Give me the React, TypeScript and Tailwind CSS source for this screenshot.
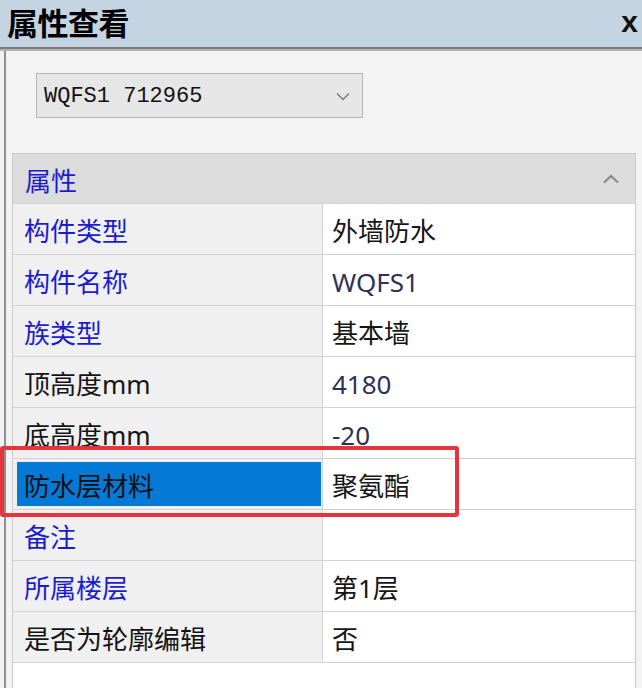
import React from "react";

const CJK = { fontFamily: '"Noto Sans", "Noto Sans CJK SC", sans-serif' };

type Row = { label: string; value: string; labelBlue: boolean; valueTone?: "navy" | "dark"; selected?: boolean };

const rows: Row[] = [
  { label: "构件类型", value: "外墙防水", labelBlue: true },
  { label: "构件名称", value: "WQFS1", labelBlue: true, valueTone: "navy" },
  { label: "族类型", value: "基本墙", labelBlue: true },
  { label: "顶高度mm", value: "4180", labelBlue: false, valueTone: "navy" },
  { label: "底高度mm", value: "-20", labelBlue: false, valueTone: "navy" },
  { label: "防水层材料", value: "聚氨酯", labelBlue: false, selected: true },
  { label: "备注", value: "", labelBlue: true },
  { label: "所属楼层", value: "第1层", labelBlue: true },
  { label: "是否为轮廓编辑", value: "否", labelBlue: false },
];

export default function App() {
  return (
    <div className="relative w-[642px] h-[688px] overflow-hidden bg-[#f2f2f2] flex flex-col" style={CJK}>
      {/* Title bar */}
      <div className="h-[47px] shrink-0 bg-[#c5d4e2] flex items-center justify-between pl-[7px] pr-[4px]">
        <span className="text-[31px] font-bold text-black leading-none tracking-[-0.5px]">属性查看</span>
        <span
          className="text-[30px] font-bold text-[#111] leading-none pb-[3px]"
          style={{ fontFamily: '"Liberation Sans", sans-serif' }}
        >
          x
        </span>
      </div>
      <div className="h-[2px] shrink-0 bg-[#7c7c7c]" />
      <div className="h-[2px] shrink-0 bg-[#b4b4b4]" />

      {/* Panel */}
      <div className="flex-1 ml-[4px] border-l-[2px] border-[#8e8e8e] bg-[#f3f3f3] flex flex-col pt-[22px]">
        {/* Combo */}
        <div className="ml-[30px] w-[327px] h-[45px] shrink-0 bg-[#e6e6e6] border border-[#b5b5b5] flex items-center justify-between pl-[7px] pr-[12px]">
          <span
            className="text-[22px] text-[#111] leading-none pt-[3px]"
            style={{ fontFamily: '"Liberation Mono", monospace' }}
          >
            WQFS1 712965
          </span>
          <svg width="14" height="9" viewBox="0 0 14 9" className="mt-[2px]">
            <path d="M1 1.5 L7 7.5 L13 1.5" fill="none" stroke="#7a7a7a" strokeWidth="1.5" />
          </svg>
        </div>

        {/* Property grid */}
        <div className="mt-[35px] ml-[6px] w-[624px] flex-1 border-t border-l border-r border-[#c9c9c9] bg-white flex flex-col">
          {/* Header */}
          <div className="h-[49px] shrink-0 bg-[#dcdcdc] flex items-center justify-between pl-[12px] pr-[15px]">
            <span className="text-[26px] text-[#1c1ccf] leading-none pt-[5px]">属性</span>
            <svg width="18" height="10" viewBox="0 0 18 10">
              <path d="M2 8.5 L9 2 L16 8.5" fill="none" stroke="#8a8a8a" strokeWidth="2.2" />
            </svg>
          </div>
          {rows.map((r) => (
            <div key={r.label} className="h-[51px] shrink-0 flex border-t border-[#d3d3d3]">
              <div className="w-[310px] shrink-0 bg-[#f0f0f0] pl-[4px] border-r border-[#d3d3d3] flex">
                <div
                  className={
                    "flex-1 flex items-center pl-[7px] " +
                    (r.selected ? "bg-[#0479d6] my-[3px] mr-[1px]" : "")
                  }
                >
                  <span
                    className={
                      "text-[26px] leading-none pt-[4px] " +
                      (r.selected ? "text-[#101010]" : r.labelBlue ? "text-[#1c1ccf]" : "text-[#141414]")
                    }
                  >
                    {r.label}
                  </span>
                </div>
              </div>
              <div className="flex-1 bg-white flex items-center pl-[9px]">
                <span
                  className={
                    "text-[26px] leading-none pt-[4px] " +
                    (r.valueTone === "navy" ? "text-[#2d3158]" : "text-[#151515]")
                  }
                >
                  {r.value}
                </span>
              </div>
            </div>
          ))}
          <div className="flex-1 border-t border-[#d3d3d3] bg-white" />
        </div>
      </div>

      {/* Red annotation box */}
      <div className="absolute left-0 top-[446px] w-[459px] h-[71px] border-[4px] border-[#e3353b] rounded-[3px] pointer-events-none" />
    </div>
  );
}
